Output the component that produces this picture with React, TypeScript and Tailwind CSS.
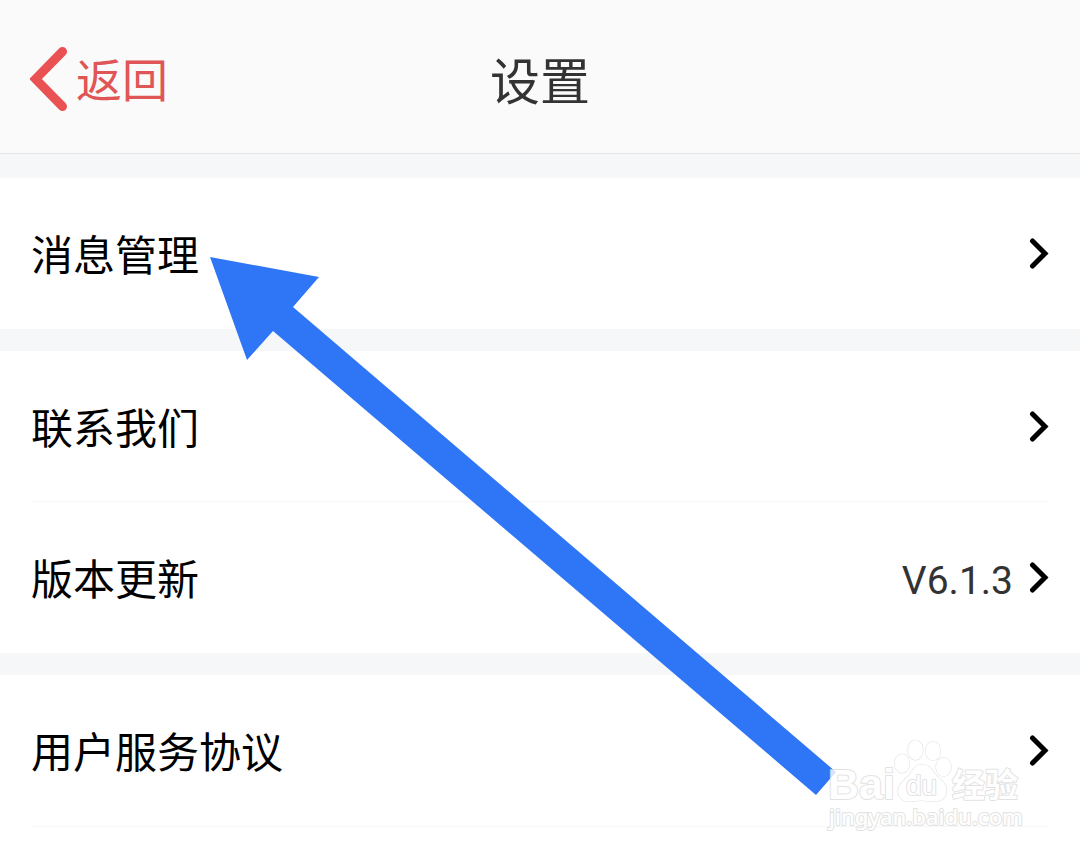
type SettingItem = {
  label: string;
  value?: string;
};

const groups: SettingItem[][] = [
  [{ label: "消息管理" }],
  [{ label: "联系我们" }, { label: "版本更新", value: "V6.1.3" }],
  [{ label: "用户服务协议" }],
];

function ChevronRight() {
  return (
    <svg width="20" height="32" viewBox="0 0 20 32" fill="none" aria-hidden="true">
      <path d="M3.500 4L16 16.500L3.500 29" stroke="#000" strokeWidth="5" strokeLinecap="round" />
    </svg>
  );
}

function SettingRow({ label, value }: SettingItem) {
  return (
    <a href="#" className="flex h-[150px] items-center justify-between text-[42px] leading-[60px] text-black">
      <span className="pt-2">{label}</span>
      <span className="flex items-center gap-4">
        {value && <span className="pt-2 text-[39px] text-[#333333]">{value}</span>}
        <ChevronRight />
      </span>
    </a>
  );
}

function Pointer() {
  return (
    <svg
      className="pointer-events-none absolute top-64 left-[209px]"
      width="628"
      height="541"
      viewBox="209 256 628 541"
      aria-hidden="true"
    >
      <path d="M210 257L319 277L293 307L836 772L816 795L273 331L247 360Z" fill="#2f76f6" />
    </svg>
  );
}

function Watermark() {
  return (
    <svg
      className="pointer-events-none absolute top-[736px] right-[56px] opacity-80"
      width="200"
      height="98"
      viewBox="824 736 200 98"
      fill="#ffffff"
      stroke="#dcdcdc"
      strokeWidth="2"
      strokeLinejoin="round"
      paintOrder="stroke"
    >
      <text x="828" y="799" fontSize="43" fontWeight="700" className="font-['Liberation_Sans',sans-serif]">
        Bai
      </text>
      <g strokeWidth="1.2">
        <ellipse cx="902" cy="763.500" rx="7.500" ry="9.500" />
        <ellipse cx="915.500" cy="750" rx="7.500" ry="10" />
        <ellipse cx="933" cy="751" rx="7.500" ry="9.500" />
        <ellipse cx="943.500" cy="767" rx="7.500" ry="9.500" />
        <path d="M922 764.500c-5 0-8 3-11 8-3 5-9 8-12 14-3 8 2 15 10 15 4 0 9-1 13-1s9 1 13 1c9 0 13-7 11-15-2-6-9-9-12-14-3-5-7-8-12-8z" />
      </g>
      <text x="906" y="795" fontSize="28" className="font-['Liberation_Sans',sans-serif]">
        du
      </text>
      <text x="952" y="797" fontSize="33" fontWeight="700" className="font-['Noto_Sans_CJK_SC',sans-serif]">
        经验
      </text>
      <text x="829" y="825" fontSize="22" fontWeight="500" className="font-['Noto_Sans',sans-serif]">
        jingyan.baidu.com
      </text>
    </svg>
  );
}

export default function App() {
  return (
    <div className="relative min-h-screen overflow-hidden bg-white font-[Roboto,'Noto_Sans_CJK_SC',sans-serif]">
      <header className="grid h-[154px] grid-cols-3 items-center border-b border-[#e3e5e7] bg-[#fafafa] px-[30px] pt-1">
        <button type="button" className="flex items-center gap-2 text-[46px] leading-[64px] text-[#e05555]">
          <svg width="38" height="64" viewBox="0 0 38 64" fill="none" aria-hidden="true">
            <path d="M32.500 4.500L5.500 32L32.500 59.500" stroke="#ea5153" strokeWidth="9" strokeLinecap="round" />
          </svg>
          <span className="pt-1">返回</span>
        </button>
        <h1 className="pt-2 text-center text-[50px] leading-[64px] text-[#333333]">设置</h1>
      </header>

      <main className="flex flex-col gap-[22px] bg-[#f6f7f9] pt-6">
        {groups.map((items) => (
          <ul key={items[0].label} className="bg-white px-[31px]">
            {items.map((item) => (
              <li key={item.label} className="border-b border-[#f7f7f7] last:border-white">
                <SettingRow {...item} />
              </li>
            ))}
          </ul>
        ))}
      </main>
      <hr className="mx-[31px] border-[#f7f7f7]" />

      <Pointer />
      <Watermark />
    </div>
  );
}
